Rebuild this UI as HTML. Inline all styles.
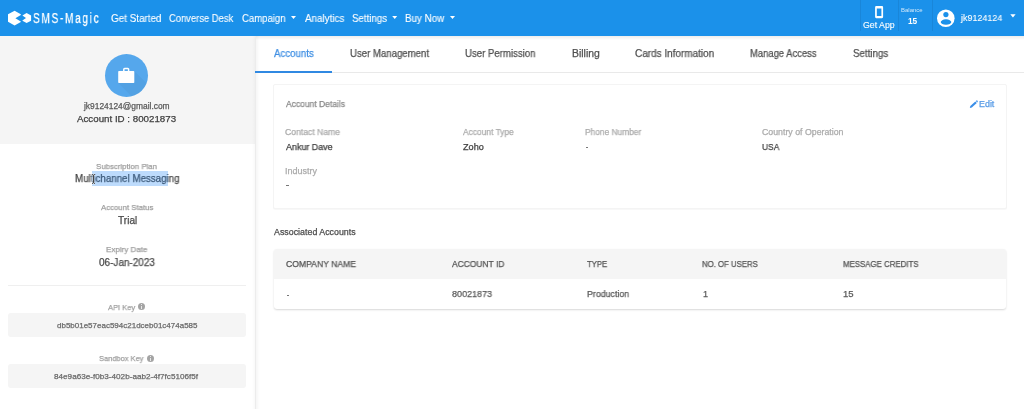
<!DOCTYPE html>
<html><head><meta charset="utf-8">
<style>
html,body{margin:0;padding:0;width:1024px;height:409px;overflow:hidden;background:#fff;font-family:"Liberation Sans",sans-serif;}
.a{position:absolute;}
.t{position:absolute;white-space:nowrap;transform-origin:0 0;will-change:transform;-webkit-text-stroke:0.25px currentColor;}
#hdr{left:0;top:0;width:1024px;height:36px;background:#1b91ea;}
#hdrsh{left:0;top:36px;width:1024px;height:4px;background:linear-gradient(rgba(0,0,0,0.07),rgba(0,0,0,0));}
.div{top:0;width:1px;height:31px;background:rgba(0,0,0,0.07);}
#side{left:0;top:36px;width:255px;height:373px;background:#fff;}
#sidetop{left:0;top:36px;width:255px;height:108px;background:#f5f5f5;}
#sideb{left:255px;top:36px;width:1px;height:373px;background:#ececec;}
#sidesh{left:256px;top:36px;width:4px;height:373px;background:linear-gradient(90deg,rgba(0,0,0,0.035),rgba(0,0,0,0));}
#sidesh2{left:252px;top:36px;width:3px;height:373px;background:linear-gradient(90deg,rgba(0,0,0,0),rgba(0,0,0,0.025));}
#avatar{left:105px;top:54px;width:43px;height:43px;border-radius:50%;background:#55a7ec;overflow:hidden;}
#sel{left:92px;top:171px;width:76px;height:15px;background:#bddbfc;}
#sep{left:8px;top:285px;width:238px;height:1px;background:#efefef;}
.box{left:8px;width:238px;border-radius:3px;background:#f5f5f5;}
.info{width:7px;height:7px;border-radius:50%;background:#a4a4a4;}
.info:after{content:"";position:absolute;left:3px;top:3px;width:1px;height:3px;background:rgba(255,255,255,0.75);}
.info:before{content:"";position:absolute;left:3px;top:1px;width:1px;height:1px;background:rgba(255,255,255,0.75);}
#tabline{left:256px;top:72px;width:768px;height:1px;background:#e9e9e9;}
#tabact{left:255px;top:71px;width:77px;height:2px;background:#3089e2;}
#card{left:273px;top:84px;width:732px;height:123px;border:1px solid #f4f4f4;border-radius:2px;background:#fff;box-shadow:0 1px 1px rgba(0,0,0,0.03);}
#tbl{left:274px;top:249px;width:732px;height:60px;border-radius:3px;background:#fff;box-shadow:0 1px 2px rgba(0,0,0,0.16);overflow:hidden;}
#thead{left:0;top:0;width:732px;height:30px;background:#f5f5f5;}
.dash{height:1px;}
</style></head>
<body>
<div class="a" id="hdr"></div>
<div class="a div" style="left:860px"></div>
<div class="a div" style="left:898px"></div>
<div class="a div" style="left:932px"></div>
<svg class="a" style="left:0;top:0" width="40" height="36" viewBox="0 0 40 36">
  <polygon fill="#fff" points="14.6,10.8 20.8,14.2 20.8,14.9 15.4,18.3 20.8,21.5 20.8,21.9 14.6,25.4 8,21.7 8,14.3"/>
  <polygon fill="#fff" points="26.6,12.9 31.1,15.4 31.1,20.7 26.6,23.1 22.4,20.7 22.4,20.4 26,18 22.4,15.6 22.4,15.4"/>
</svg>
<div class="t" style="left:33.2px;top:11.1px;font-size:14px;line-height:14px;color:#fff;letter-spacing:2.35px;transform:scaleX(0.72);">SMS-Magic</div>
<!-- carets -->
<svg class="a" style="left:0;top:0" width="1024" height="36">
  <polygon fill="#fff" points="291,16 296,16 293.5,19"/>
  <polygon fill="#fff" points="392.2,16 397.2,16 394.7,19"/>
  <polygon fill="#fff" points="450,16 455,16 452.5,19"/>
  <polygon fill="#fff" points="1010.3,14.3 1015.6,14.3 1012.95,17.4"/>
  <!-- phone -->
  <path fill="#fff" fill-rule="evenodd" d="M876.2 6.1 H882 Q883.1 6.1 883.1 7.2 V17.1 Q883.1 18.2 882 18.2 H876.2 Q875.1 18.2 875.1 17.1 V7.2 Q875.1 6.1 876.2 6.1 Z M876.8 8.6 V15.9 H881.4 V8.6 Z"/>
  <!-- account -->
  <circle cx="945.8" cy="18.2" r="8.8" fill="#fff"/>
  <circle cx="945.9" cy="14.6" r="2.6" fill="#1b91ea"/>
  <ellipse cx="946" cy="22.1" rx="5.3" ry="2.75" fill="#1b91ea"/>
</svg>
<div class="a" id="hdrsh"></div>

<div class="a" id="side"></div>
<div class="a" id="sidetop"></div>
<div class="a" id="sideb"></div>
<div class="a" id="sidesh"></div>
<div class="a" id="sidesh2"></div>
<div class="a" id="avatar">
  <svg class="a" style="left:0;top:0" width="43" height="43"><polygon points="13.2,29 29.3,29 29.3,16.9 60,47.6 44,60" fill="rgba(0,0,0,0.035)"/></svg>
</div>
<svg class="a" style="left:105px;top:54px" width="43" height="43">
  <rect x="13.2" y="16.9" width="16.1" height="12.1" rx="0.8" fill="#fff"/>
  <path d="M18.8 17 V15.4 a0.8 0.8 0 0 1 0.8 -0.8 H22.8 a0.8 0.8 0 0 1 0.8 0.8 V17" fill="none" stroke="#fff" stroke-width="1.5"/>
</svg>
<div class="a" id="sel"></div>
<div class="a" id="sep"></div>
<svg class="a" style="left:90px;top:172px;z-index:5" width="8" height="14"><path d="M2 2.3 Q3.5 2.6 3.5 4 V10 Q3.5 11.4 2 11.7 M5 2.3 Q3.5 2.6 3.5 4 V10 Q3.5 11.4 5 11.7" fill="none" stroke="rgba(255,255,255,0.6)" stroke-width="2"/><path d="M2 2.3 Q3.5 2.6 3.5 4 V10 Q3.5 11.4 2 11.7 M5 2.3 Q3.5 2.6 3.5 4 V10 Q3.5 11.4 5 11.7" fill="none" stroke="#444" stroke-width="0.9"/></svg>
<div class="a box" style="top:313px;height:24px;"></div>
<div class="a box" style="top:364px;height:24px;"></div>
<div class="a info" style="left:138px;top:303px;"></div>
<div class="a info" style="left:146.5px;top:355px;"></div>

<div class="a" id="tabline"></div>
<div class="a" id="tabact"></div>
<div class="a" id="card"></div>
<svg class="a" style="left:966px;top:96px" width="16" height="16">
  <path d="M3.8 11.9 L4.3 9.9 L9.3 5.5 L10.8 7.1 L5.8 11.4 Z" fill="#3a8ee8"/>
  <path d="M9.8 5.1 L10.5 4.5 Q10.9 4.2 11.3 4.6 L11.7 5.0 Q12 5.4 11.7 5.8 L11.2 6.6 Z" fill="#3a8ee8"/>
</svg>
<div class="a" style="left:286px;top:185px;width:3px;height:1px;background:#777;"></div>
<div class="a" style="left:586px;top:146.5px;width:2px;height:1px;background:#777;"></div>
<div class="a" id="tbl"><div class="a" id="thead"></div></div>
<div class="a" style="left:287px;top:294.5px;width:2px;height:1px;background:#777;"></div>
<div class="t" style="left:110.91px;top:14.25px;font-size:10.29px;line-height:10.29px;color:#ffffff;font-weight:normal;transform:scaleX(0.9602);-webkit-text-stroke:0.1px currentColor;">Get Started</div>
<div class="t" style="left:169.19px;top:14.25px;font-size:10.29px;line-height:10.29px;color:#ffffff;font-weight:normal;transform:scaleX(0.9138);-webkit-text-stroke:0.1px currentColor;">Converse Desk</div>
<div class="t" style="left:242.33px;top:14.25px;font-size:10.29px;line-height:10.29px;color:#ffffff;font-weight:normal;transform:scaleX(0.9269);-webkit-text-stroke:0.1px currentColor;">Campaign</div>
<div class="t" style="left:304.75px;top:14.25px;font-size:10.29px;line-height:10.29px;color:#ffffff;font-weight:normal;transform:scaleX(0.9571);-webkit-text-stroke:0.1px currentColor;">Analytics</div>
<div class="t" style="left:352.11px;top:14.25px;font-size:10.29px;line-height:10.29px;color:#ffffff;font-weight:normal;transform:scaleX(0.9444);-webkit-text-stroke:0.1px currentColor;">Settings</div>
<div class="t" style="left:405.46px;top:14.25px;font-size:10.29px;line-height:10.29px;color:#ffffff;font-weight:normal;transform:scaleX(0.9545);-webkit-text-stroke:0.1px currentColor;">Buy Now</div>
<div class="t" style="left:863.47px;top:20.77px;font-size:8.5px;line-height:8.5px;color:#ffffff;font-weight:normal;transform:scaleX(1.0328);-webkit-text-stroke:0.1px currentColor;">Get App</div>
<div class="t" style="left:901.27px;top:6.91px;font-size:5.99px;line-height:5.99px;color:rgba(255,255,255,0.8);font-weight:normal;transform:scaleX(0.9945);-webkit-text-stroke:0;">Balance</div>
<div class="t" style="left:907.50px;top:18.07px;font-size:8.15px;line-height:8.15px;color:#ffffff;font-weight:bold;transform:scaleX(1.0225);-webkit-text-stroke:0;">15</div>
<div class="t" style="left:961.18px;top:14.37px;font-size:8.98px;line-height:8.98px;color:#ffffff;font-weight:normal;transform:scaleX(0.9925);-webkit-text-stroke:0.1px currentColor;">jk9124124</div>
<div class="t" style="left:274.00px;top:49.28px;font-size:10.26px;line-height:10.26px;color:#3f8fe3;font-weight:normal;transform:scaleX(0.9436);">Accounts</div>
<div class="t" style="left:349.73px;top:49.28px;font-size:10.26px;line-height:10.26px;color:#505050;font-weight:normal;transform:scaleX(0.9369);">User Management</div>
<div class="t" style="left:465.48px;top:49.28px;font-size:10.26px;line-height:10.26px;color:#505050;font-weight:normal;transform:scaleX(0.9374);">User Permission</div>
<div class="t" style="left:571.67px;top:49.28px;font-size:10.26px;line-height:10.26px;color:#505050;font-weight:normal;transform:scaleX(1.0153);">Billing</div>
<div class="t" style="left:635.15px;top:49.28px;font-size:10.26px;line-height:10.26px;color:#505050;font-weight:normal;transform:scaleX(0.9722);">Cards Information</div>
<div class="t" style="left:749.74px;top:49.28px;font-size:10.26px;line-height:10.26px;color:#505050;font-weight:normal;transform:scaleX(0.9199);">Manage Access</div>
<div class="t" style="left:852.61px;top:49.28px;font-size:10.26px;line-height:10.26px;color:#505050;font-weight:normal;transform:scaleX(0.9499);">Settings</div>
<div class="t" style="left:84.17px;top:103.00px;font-size:8.24px;line-height:8.24px;color:#5a5a5a;font-weight:normal;transform:scaleX(1.0203);">jk9124124@gmail.com</div>
<div class="t" style="left:77.10px;top:114.01px;font-size:9.4px;line-height:9.4px;color:#404040;font-weight:normal;transform:scaleX(1.0387);">Account ID : 80021873</div>
<div class="t" style="left:96.44px;top:163.10px;font-size:8.12px;line-height:8.12px;color:#9e9e9e;font-weight:normal;transform:scaleX(0.9677);">Subscription Plan</div>
<div class="t" style="left:74.72px;top:174.41px;font-size:10.11px;line-height:10.11px;color:#474747;font-weight:normal;transform:scaleX(0.9653);">Mul<span style="color:#5a6f86">t</span><span style="color:#3b5878">ichannel Messagi</span>ng</div>
<div class="t" style="left:100.90px;top:204.10px;font-size:8.12px;line-height:8.12px;color:#9e9e9e;font-weight:normal;transform:scaleX(0.9605);">Account Status</div>
<div class="t" style="left:117.80px;top:216.41px;font-size:10.11px;line-height:10.11px;color:#474747;font-weight:normal;transform:scaleX(0.9918);">Trial</div>
<div class="t" style="left:106.11px;top:246.10px;font-size:8.12px;line-height:8.12px;color:#9e9e9e;font-weight:normal;transform:scaleX(0.9860);">Expiry Date</div>
<div class="t" style="left:98.60px;top:258.41px;font-size:10.11px;line-height:10.11px;color:#4a4a4a;font-weight:normal;transform:scaleX(0.9864);">06-Jan-2023</div>
<div class="t" style="left:107.75px;top:304.10px;font-size:8.12px;line-height:8.12px;color:#9e9e9e;font-weight:normal;transform:scaleX(0.9270);">API Key</div>
<div class="t" style="left:56.58px;top:322.23px;font-size:7.96px;line-height:7.96px;color:#6a6a6a;font-weight:normal;transform:scaleX(1.0051);">db5b01e57eac594c21dceb01c474a585</div>
<div class="t" style="left:99.10px;top:355.10px;font-size:8.12px;line-height:8.12px;color:#9e9e9e;font-weight:normal;transform:scaleX(0.9205);">Sandbox Key</div>
<div class="t" style="left:54.42px;top:373.23px;font-size:7.96px;line-height:7.96px;color:#6a6a6a;font-weight:normal;transform:scaleX(1.0245);">84e9a63e-f0b3-402b-aab2-4f7fc5106f5f</div>
<div class="t" style="left:286.25px;top:99.56px;font-size:8.75px;line-height:8.75px;color:#888888;font-weight:normal;transform:scaleX(0.9703);">Account Details</div>
<div class="t" style="left:978.79px;top:99.55px;font-size:8.77px;line-height:8.77px;color:#569ae6;font-weight:normal;transform:scaleX(1.0151);">Edit</div>
<div class="t" style="left:285.48px;top:127.56px;font-size:8.75px;line-height:8.75px;color:#ababab;font-weight:normal;transform:scaleX(0.9845);">Contact Name</div>
<div class="t" style="left:286.00px;top:143.25px;font-size:9.12px;line-height:9.12px;color:#404040;font-weight:normal;transform:scaleX(0.9790);">Ankur Dave</div>
<div class="t" style="left:463.25px;top:127.56px;font-size:8.75px;line-height:8.75px;color:#ababab;font-weight:normal;transform:scaleX(0.9590);">Account Type</div>
<div class="t" style="left:462.89px;top:143.25px;font-size:9.12px;line-height:9.12px;color:#404040;font-weight:normal;transform:scaleX(0.9968);">Zoho</div>
<div class="t" style="left:585.08px;top:127.56px;font-size:8.75px;line-height:8.75px;color:#ababab;font-weight:normal;transform:scaleX(0.9552);">Phone Number</div>
<div class="t" style="left:762.07px;top:127.56px;font-size:8.75px;line-height:8.75px;color:#ababab;font-weight:normal;transform:scaleX(1.0031);">Country of Operation</div>
<div class="t" style="left:761.93px;top:143.25px;font-size:9.12px;line-height:9.12px;color:#404040;font-weight:normal;transform:scaleX(0.9220);">USA</div>
<div class="t" style="left:285.10px;top:166.56px;font-size:8.75px;line-height:8.75px;color:#ababab;font-weight:normal;transform:scaleX(1.0322);">Industry</div>
<div class="t" style="left:274.00px;top:227.60px;font-size:8.71px;line-height:8.71px;color:#4d4d4d;font-weight:normal;transform:scaleX(1.0171);">Associated Accounts</div>
<div class="t" style="left:286.23px;top:259.61px;font-size:8.69px;line-height:8.69px;color:#545454;font-weight:normal;transform:scaleX(0.9922);">COMPANY NAME</div>
<div class="t" style="left:451.90px;top:259.61px;font-size:8.69px;line-height:8.69px;color:#545454;font-weight:normal;transform:scaleX(0.9733);">ACCOUNT ID</div>
<div class="t" style="left:587.09px;top:259.61px;font-size:8.69px;line-height:8.69px;color:#545454;font-weight:normal;transform:scaleX(0.8948);">TYPE</div>
<div class="t" style="left:702.48px;top:259.61px;font-size:8.69px;line-height:8.69px;color:#545454;font-weight:normal;transform:scaleX(0.8990);">NO. OF USERS</div>
<div class="t" style="left:843.12px;top:259.61px;font-size:8.69px;line-height:8.69px;color:#545454;font-weight:normal;transform:scaleX(0.9074);">MESSAGE CREDITS</div>
<div class="t" style="left:451.54px;top:290.22px;font-size:9.15px;line-height:9.15px;color:#595959;font-weight:normal;transform:scaleX(0.9864);">80021873</div>
<div class="t" style="left:586.54px;top:290.22px;font-size:9.15px;line-height:9.15px;color:#595959;font-weight:normal;transform:scaleX(0.9657);">Production</div>
<div class="t" style="left:703.04px;top:290.22px;font-size:9.15px;line-height:9.15px;color:#595959;font-weight:normal;transform:scaleX(0.9758);">1</div>
<div class="t" style="left:842.99px;top:290.22px;font-size:9.15px;line-height:9.15px;color:#595959;font-weight:normal;transform:scaleX(1.0427);">15</div>
</body></html>
